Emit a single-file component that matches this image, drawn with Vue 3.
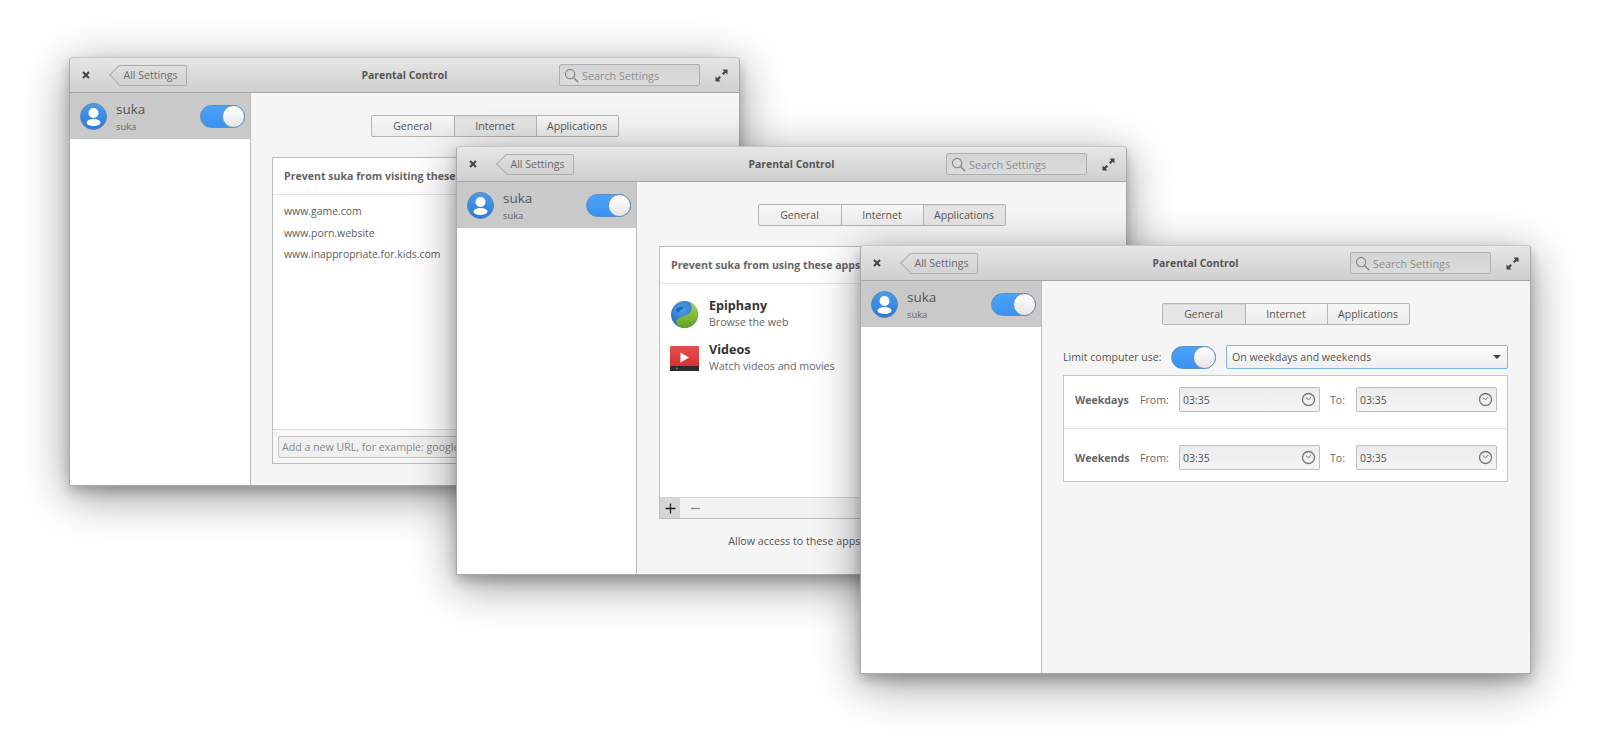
<script setup>
const windows = [
  { id: 1, active: 'Internet' },
  { id: 2, active: 'Applications' },
  { id: 3, active: 'General' }
]
const tabs = ['General', 'Internet', 'Applications']
const urls = ['www.game.com', 'www.porn.website', 'www.inappropriate.for.kids.com']
const schedule = ['Weekdays', 'Weekends']
</script>

<template>
  <div class="desktop">
    <section v-for="w in windows" :key="w.id" class="window" :class="'w' + w.id">
      <header class="titlebar">
        <svg class="close" width="8" height="8" viewBox="0 0 8 8"><path d="M1 1l6 6M7 1L1 7" stroke="#444" stroke-width="2" fill="none"/></svg>
        <button class="back"><span>All Settings</span></button>
        <h1 class="title">Parental Control</h1>
        <div class="search">
          <svg width="15" height="15" viewBox="0 0 16 16"><circle cx="6.5" cy="6.5" r="5" fill="none" stroke="#888" stroke-width="1.2"/><path d="M10.2 10.2l5 5" stroke="#888" stroke-width="1.6"/></svg>
          <span>Search Settings</span>
        </div>
        <svg class="expand" width="13" height="13" viewBox="0 0 13 13"><path d="M7.5 0.5H12.5V5.5L10.8 3.8 8.6 6 7 4.4 9.2 2.2ZM5.5 12.5H0.5V7.5L2.2 9.2 4.4 7 6 8.6 3.8 10.8Z" fill="#444"/></svg>
      </header>
      <div class="body">
        <aside class="sidebar">
          <div class="user">
            <svg class="avatar" width="27" height="27" viewBox="0 0 27 27">
              <defs><linearGradient :id="'av' + w.id" x1="0" y1="0" x2="0" y2="1"><stop offset="0" stop-color="#4a9cf0"/><stop offset="1" stop-color="#2a7ad6"/></linearGradient></defs>
              <circle cx="13.5" cy="13.5" r="13" :fill="'url(#av' + w.id + ')'" stroke="#5b87b5" stroke-width="1"/>
              <circle cx="13.5" cy="10" r="5" fill="#fff"/>
              <ellipse cx="13.5" cy="19.5" rx="7" ry="3.6" fill="#fff"/>
            </svg>
            <div class="names">
              <div class="name">suka</div>
              <div class="login">suka</div>
            </div>
            <div class="switch"><i></i></div>
          </div>
        </aside>
        <main class="main">
          <div class="tabs">
            <span v-for="t in tabs" :key="t" class="tab" :class="{ on: t === w.active }">{{ t }}</span>
          </div>

          <div v-if="w.id === 1" class="frame frame-urls">
            <div class="frame-head">Prevent suka from visiting these websites:</div>
            <ul class="urls"><li v-for="u in urls" :key="u">{{ u }}</li></ul>
            <div class="add-row"><div class="add-entry">Add a new URL, for example: google.com</div></div>
          </div>

          <template v-if="w.id === 2">
            <div class="frame frame-apps">
              <div class="frame-head">Prevent suka from using these apps:</div>
              <div class="apps">
                <div class="app">
                  <svg width="29" height="29" viewBox="0 0 29 29" class="app-icon">
                    <defs>
                      <radialGradient id="globe" cx=".4" cy=".3" r=".8"><stop offset="0" stop-color="#4f9fe8"/><stop offset="1" stop-color="#1b5fae"/></radialGradient>
                      <linearGradient id="leaf" x1="0" y1="0" x2="0" y2="1"><stop offset="0" stop-color="#a8d24e"/><stop offset="1" stop-color="#5fa326"/></linearGradient>
                    </defs>
                    <circle cx="14.5" cy="14.5" r="13.5" fill="url(#globe)"/>
                    <path d="M19.5 2A13.5 13.5 0 0 1 11.2 27.6C6 25 5 21 8 18.5 11 16 20 16 21.500 10 22 7 21 4 19.5 2Z" fill="url(#leaf)"/>
                    <path d="M6 9c2-2 5-3 7-2 1 1-.5 2.500-2.500 3-1 .5-.5 2-2 2.500-1.500.2-2.500-.5-2.500-3.500Z" fill="#1f6cc0"/>
                  </svg>
                  <div><div class="app-name">Epiphany</div><div class="app-desc">Browse the web</div></div>
                </div>
                <div class="app">
                  <svg width="29" height="25" viewBox="0 0 29 25" class="app-icon">
                    <defs><linearGradient id="vid" x1="0" y1="0" x2="0" y2="1"><stop offset="0" stop-color="#e8504f"/><stop offset="1" stop-color="#cf2a2a"/></linearGradient></defs>
                    <rect x="0" y="0" width="29" height="25" rx="1" fill="url(#vid)"/>
                    <rect x="0" y="20" width="29" height="5" fill="#2c2c2c"/>
                    <circle cx="7" cy="22.500" r="1" fill="#777"/>
                    <path d="M10.500 6.500L19 11.500 10.500 16.500Z" fill="#fff"/>
                  </svg>
                  <div><div class="app-name">Videos</div><div class="app-desc">Watch videos and movies</div></div>
                </div>
              </div>
              <div class="toolbar">
                <span class="tool plus"><svg width="13" height="13" viewBox="0 0 13 13"><path d="M6.500 1.500v10M1.500 6.500h10" stroke="#222" stroke-width="1.300"/></svg></span>
                <span class="tool"><svg width="13" height="13" viewBox="0 0 13 13"><path d="M2 6.500h9" stroke="#888" stroke-width="1.300"/></svg></span>
              </div>
            </div>
            <div class="allow">
              <span>Allow access to these apps with admin permission:</span>
              <div class="switch"><i></i></div>
            </div>
          </template>

          <template v-if="w.id === 3">
            <div class="limit">
              <span class="limit-label">Limit computer use:</span>
              <div class="switch"><i></i></div>
              <div class="combo"><span>On weekdays and weekends</span><b class="caret"></b></div>
            </div>
            <div class="sched">
              <div v-for="s in schedule" :key="s" class="sched-row">
                <strong class="day">{{ s }}</strong>
                <span class="lbl-from">From:</span>
                <div class="time">03:35<svg width="15" height="15" viewBox="0 0 15 15"><circle cx="7.500" cy="7.500" r="6" fill="none" stroke="#777" stroke-width="1.300"/><path d="M7.700 7.800L4.800 5.600M7.700 7.800L10 5" stroke="#777" stroke-width="1" fill="none"/></svg></div>
                <span class="lbl-to">To:</span>
                <div class="time">03:35<svg width="15" height="15" viewBox="0 0 15 15"><circle cx="7.500" cy="7.500" r="6" fill="none" stroke="#777" stroke-width="1.300"/><path d="M7.700 7.800L4.800 5.600M7.700 7.800L10 5" stroke="#777" stroke-width="1" fill="none"/></svg></div>
              </div>
            </div>
          </template>
        </main>
      </div>
    </section>
  </div>
</template>

<style>
html, body { background: #fff; }
</style>

<style scoped>
.desktop {
  position: relative;
  width: 1600px;
  height: 756px;
  overflow: hidden;
  background: #fff;
  font-family: "Open Sans", "Noto Sans", sans-serif;
  font-size: 10.5px;
  color: #555;
}
.window {
  position: absolute;
  width: 671px;
  height: 429px;
  display: flex;
  flex-direction: column;
  box-sizing: border-box;
  border: 1px solid #a9a9a9;
  border-top-color: #c8c8c8;
  border-radius: 4px 4px 0 0;
  background: #f5f5f5;
  box-shadow: 0 10px 45px rgba(0, 0, 0, .42), 0 6px 12px rgba(0, 0, 0, .2);
}
.w1 { left: 69px; top: 57px; }
.w2 { left: 456px; top: 146px; }
.w3 { left: 860px; top: 245px; }
.w2 .sidebar { width: 180px; }
.w2 .main { padding-left: 22px; }

.titlebar {
  flex: none;
  height: 35px;
  box-sizing: border-box;
  display: flex;
  align-items: center;
  position: relative;
  padding: 0 11px 0 12px;
  background: linear-gradient(#e6e6e6, #cfcfcf);
  border-bottom: 1px solid #a6a6a6;
  border-radius: 3px 3px 0 0;
}
.close { flex: none; }
.back {
  position: relative;
  margin-left: 29px;
  height: 21px;
  width: 68px;
  box-sizing: border-box;
  padding: 0 4px 0 0;
  font: 10.6px "Open Sans", sans-serif;
  color: #6a6a6a;
  text-align: center;
  background: linear-gradient(#dfdfdf, #d2d2d2);
  border: 1px solid #adadad;
  border-left: 0;
  border-radius: 0 2px 2px 0;
}
.back span { position: relative; }
.back::before {
  content: "";
  position: absolute;
  left: -7px;
  top: 2px;
  width: 14px;
  height: 14px;
  box-sizing: border-box;
  background: linear-gradient(135deg, #dfdfdf, #d2d2d2);
  border-left: 1px solid #adadad;
  border-bottom: 1px solid #adadad;
  transform: rotate(45deg);
}
.title {
  position: absolute;
  left: 0;
  right: 0;
  margin: 0;
  text-align: center;
  font-size: 10.4px;
  font-weight: 700;
  color: #555;
  pointer-events: none;
}
.search {
  margin-left: auto;
  width: 141px;
  height: 22px;
  box-sizing: border-box;
  display: flex;
  align-items: center;
  gap: 3px;
  padding: 0 4px;
  border: 1px solid #b0b0b0;
  border-radius: 2px;
  background: linear-gradient(#d4d4d4, #dcdcdc);
  color: #8e8e8e;
  font-size: 10.8px;
}
.expand { flex: none; margin-left: 15px; }

.body { flex: 1; display: flex; min-height: 0; }
.sidebar {
  flex: none;
  width: 181px;
  box-sizing: border-box;
  background: #fff;
  border-right: 1px solid #bcbcbc;
}
.user {
  height: 46px;
  box-sizing: border-box;
  display: flex;
  align-items: center;
  padding: 0 5px 0 10px;
  background: #c9c9c9;
}
.avatar { flex: none; }
.names { margin-left: 9px; flex: 1; color: #555; }
.name { font-size: 13.5px; line-height: 18px; margin-top: 1px; }
.login { font-size: 9.3px; line-height: 15px; margin-top: 1px; color: #666; }

.switch {
  flex: none;
  position: relative;
  width: 45px;
  height: 23px;
  box-sizing: border-box;
  border: 1px solid #5c8fc4;
  border-radius: 12px;
  background: linear-gradient(#4aa1f8, #3a93ef);
}
.switch i {
  position: absolute;
  right: -1px;
  top: -1px;
  width: 23px;
  height: 23px;
  box-sizing: border-box;
  border: 1px solid #6d93b8;
  border-radius: 50%;
  background: linear-gradient(#fff, #e6e6e6);
}
.main {
  flex: 1;
  min-width: 0;
  box-sizing: border-box;
  padding: 22px 22px 0 21px;
  display: flex;
  flex-direction: column;
  background: #f5f5f5;
}
.tabs {
  display: flex;
  align-self: center;
  height: 22px;
  box-sizing: border-box;
  border: 1px solid #b4b4b4;
  border-radius: 2px;
  background: linear-gradient(#f7f7f7, #ececec);
}
.tab {
  width: 82px;
  box-sizing: border-box;
  text-align: center;
  line-height: 20px;
  font-size: 10.5px;
  color: #555;
  border-left: 1px solid #b4b4b4;
}
.tab:first-child { border-left: 0; }
.tab.on { background: #e6e6e6; box-shadow: inset 0 1px 1px rgba(0, 0, 0, .06); }

.frame {
  background: #fff;
  border: 1px solid #bdbdbd;
  display: flex;
  flex-direction: column;
}
.frame-urls { margin-top: 20px; height: 307px; box-sizing: border-box; }
.frame-apps { margin-top: 20px; height: 273px; box-sizing: border-box; }
.frame-head {
  flex: none;
  height: 37px;
  box-sizing: border-box;
  padding: 0 11px;
  line-height: 36px;
  font-size: 10.6px;
  font-weight: 700;
  color: #666;
  border-bottom: 1px solid #e2e2e2;
}
.urls {
  flex: 1;
  margin: 0;
  padding: 6px 11px 0;
  list-style: none;
  font-size: 10.45px;
  line-height: 21.5px;
  color: #5c5c5c;
}
.add-row {
  flex: none;
  height: 34px;
  box-sizing: border-box;
  padding: 6px 5px;
  border-top: 1px solid #dcdcdc;
  background: #f7f7f7;
}
.add-entry {
  height: 22px;
  box-sizing: border-box;
  padding: 0 3px;
  line-height: 20px;
  border: 1px solid #c2c2c2;
  border-radius: 2px;
  background: #f0f0f0;
  color: #8a8a8a;
  font-size: 10.6px;
  white-space: nowrap;
}
.apps { flex: 1; padding-top: 8px; }
.app {
  height: 44px;
  display: flex;
  align-items: center;
  padding-left: 10px;
  gap: 10px;
}
.app-icon { flex: none; width: 29px; }
.app-name { font-size: 12.6px; font-weight: 700; line-height: 16px; color: #333; }
.app-desc { font-size: 10.65px; line-height: 16px; color: #666; }
.toolbar {
  flex: none;
  height: 21px;
  box-sizing: border-box;
  display: flex;
  background: #f2f2f2;
  border-top: 1px solid #d2d2d2;
}
.tool {
  width: 20px;
  display: flex;
  align-items: center;
  justify-content: center;
  margin-right: 5px;
}
.plus { background: #d6d6d6; }
.allow {
  margin-top: 10px;
  height: 24px;
  display: flex;
  align-items: center;
  justify-content: center;
  gap: 10px;
  font-size: 10.7px;
  color: #555;
  white-space: nowrap;
}

.limit { display: flex; align-items: center; margin-top: 20px; height: 24px; }
.limit-label { width: 108px; flex: none; font-size: 10.6px; color: #555; white-space: nowrap; }
.combo {
  flex: 1;
  margin-left: 10px;
  height: 24px;
  box-sizing: border-box;
  display: flex;
  align-items: center;
  justify-content: space-between;
  padding: 0 6px 0 5px;
  border: 1px solid #7db5ea;
  border-radius: 2px;
  background: linear-gradient(#fbfbfb, #efefef);
  font-size: 10.55px;
  color: #555;
}
.caret {
  width: 0;
  height: 0;
  border-left: 4.5px solid transparent;
  border-right: 4.5px solid transparent;
  border-top: 4.5px solid #444;
}
.sched {
  margin-top: 6px;
  background: #fff;
  border: 1px solid #c6c6c6;
}
.sched-row {
  display: grid;
  grid-template-columns: 65px 39px 141px 36px 141px;
  align-items: center;
  padding: 11px 0 16px 11px;
}
.sched-row + .sched-row {
  border-top: 1px solid #e0e0e0;
  padding: 16px 0 11px 11px;
}
.day { font-size: 10.6px; font-weight: 700; color: #666; }
.lbl-from, .lbl-to { font-size: 10.6px; color: #666; }
.lbl-to { padding-left: 10px; }
.time {
  height: 25px;
  box-sizing: border-box;
  display: flex;
  align-items: center;
  justify-content: space-between;
  padding: 0 3px 0 3px;
  border: 1px solid #bebebe;
  border-radius: 2px;
  background: linear-gradient(#ececec, #f4f4f4);
  font-size: 10.5px;
  color: #555;
}
</style>
